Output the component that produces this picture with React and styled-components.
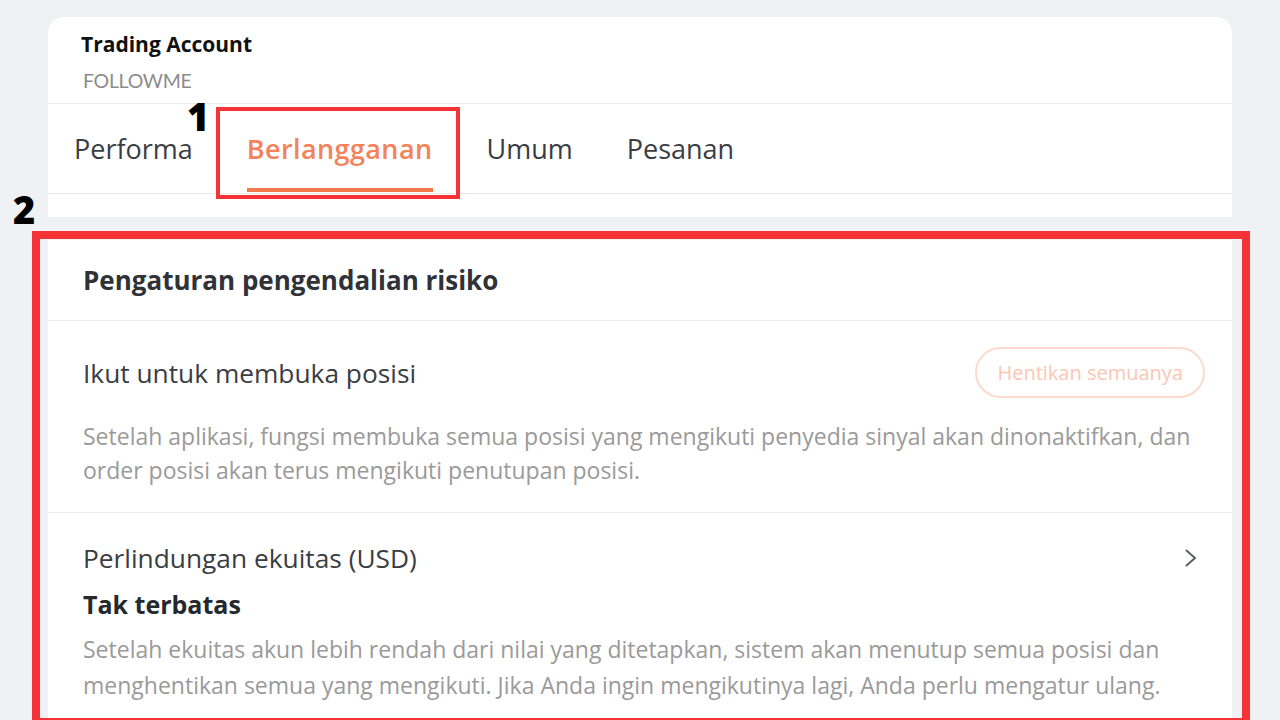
import React from "react";
import styled, { createGlobalStyle } from "styled-components";

const Global = createGlobalStyle`
  html, body { margin: 0; padding: 0; }
  body {
    background: #eff1f5;
    font-family: "Open Sans", "Noto Sans", sans-serif;
    width: 1280px;
    height: 720px;
    overflow: hidden;
  }
`;

const Page = styled.div`
  position: relative;
  width: 1280px;
  height: 720px;
  padding-top: 17px;
  box-sizing: border-box;
`;

const TopCard = styled.section`
  margin-left: 48px;
  width: 1184px;
  background: #fff;
  border-radius: 16px 16px 0 0;
`;

const Header = styled.div`
  padding: 14px 0 0 33px;
  height: 72px;
  border-bottom: 1px solid #e9eaec;
`;

const AccountTitle = styled.div`
  font-family: "Open Sans", sans-serif;
  font-weight: 700;
  font-size: 21px;
  line-height: 26px;
  color: #111;
`;

const AccountSub = styled.div`
  font-family: "Lato", sans-serif;
  font-size: 19.5px;
  line-height: 22px;
  margin: 13px 0 0 2px;
  color: #8c8c8c;
  letter-spacing: -0.3px;
`;

const Tabs = styled.nav`
  display: flex;
  height: 89px;
  padding-left: 26px;
  gap: 54px;
  border-bottom: 1px solid #e9eaec;
`;

const Tab = styled.div`
  position: relative;
  display: flex;
  align-items: center;
  font-size: 27px;
  font-weight: ${(p) => (p.$active ? 600 : 400)};
  letter-spacing: ${(p) => (p.$active ? "0.4px" : "0")};
  color: ${(p) => (p.$active ? "#f5825a" : "#3a3d42")};
  &::after {
    content: "";
    display: ${(p) => (p.$active ? "block" : "none")};
    position: absolute;
    left: 0;
    right: 0;
    bottom: 1px;
    height: 4px;
    background: #f47a4c;
  }
`;

const TopSpacer = styled.div`
  height: 23px;
`;

const ContentCard = styled.section`
  margin: 23px 0 0 48px;
  width: 1184px;
  background: #fff;
`;

const TitleRow = styled.div`
  height: 80px;
  display: flex;
  align-items: center;
  padding-left: 35px;
  font-size: 26px;
  font-weight: 700;
  color: #2f3338;
  border-bottom: 1px solid #e9eaec;
`;

const Item = styled.div`
  padding: ${(p) => p.$pad};
  border-bottom: ${(p) => (p.$last ? "none" : "1px solid #e9eaec")};
`;

const ItemHead = styled.div`
  display: flex;
  align-items: center;
  justify-content: space-between;
  height: ${(p) => p.$h}px;
`;

const Label = styled.div`
  font-size: 26.3px;
  line-height: 34px;
  color: #3a3d42;
`;

const Value = styled.div`
  font-size: 25px;
  font-weight: 700;
  color: #25282c;
  margin-top: 14px;
  line-height: 30px;
`;

const Desc = styled.p`
  margin: ${(p) => p.$mt}px 0 0;
  font-size: 23px;
  line-height: ${(p) => p.$lh}px;
  color: #9a9a9a;
`;

const PillButton = styled.button`
  height: 51px;
  padding: 0 20px;
  border-radius: 26px;
  border: 2px solid #fddacd;
  background: #fff;
  color: #fcc6b2;
  font-family: "Open Sans", sans-serif;
  font-size: 20px;
  cursor: not-allowed;
`;

const Chevron = styled.svg`
  width: 14px;
  height: 20px;
  margin-right: 7px;
`;

const Marker = styled.div`
  position: absolute;
  left: ${(p) => p.$x}px;
  top: ${(p) => p.$y}px;
  font-family: "Open Sans", sans-serif;
  font-weight: 800;
  font-size: 38px;
  line-height: 1;
  color: #000;
`;

const Frame = styled.div`
  position: absolute;
  left: ${(p) => p.$x}px;
  top: ${(p) => p.$y}px;
  width: ${(p) => p.$w}px;
  height: ${(p) => p.$h}px;
  border: ${(p) => p.$b}px solid #f53236;
  box-sizing: border-box;
  pointer-events: none;
`;

export default function App() {
  return (
    <>
      <Global />
      <Page>
        <TopCard>
          <Header>
            <AccountTitle>Trading Account</AccountTitle>
            <AccountSub>FOLLOWME</AccountSub>
          </Header>
          <Tabs>
            <Tab>Performa</Tab>
            <Tab $active>Berlangganan</Tab>
            <Tab>Umum</Tab>
            <Tab>Pesanan</Tab>
          </Tabs>
          <TopSpacer />
        </TopCard>

        <ContentCard>
          <TitleRow>Pengaturan pengendalian risiko</TitleRow>
          <Item $pad="26px 27px 25px 35px">
            <ItemHead $h={51}>
              <Label>Ikut untuk membuka posisi</Label>
              <PillButton disabled>Hentikan semuanya</PillButton>
            </ItemHead>
            <Desc $mt={21} $lh={34}>
              Setelah aplikasi, fungsi membuka semua posisi yang mengikuti penyedia sinyal akan dinonaktifkan, dan
              order posisi akan terus mengikuti penutupan posisi.
            </Desc>
          </Item>
          <Item $last $pad="28px 27px 20px 35px">
            <ItemHead $h={34}>
              <Label>Perlindungan ekuitas (USD)</Label>
              <Chevron viewBox="0 0 14 20" fill="none">
                <path d="M2.5 2.5 L11 10 L2.5 17.5" stroke="#5a5d62" strokeWidth="2" strokeLinecap="round" strokeLinejoin="round" />
              </Chevron>
            </ItemHead>
            <Value>Tak terbatas</Value>
            <Desc $mt={12} $lh={36}>
              Setelah ekuitas akun lebih rendah dari nilai yang ditetapkan, sistem akan menutup semua posisi dan
              menghentikan semua yang mengikuti. Jika Anda ingin mengikutinya lagi, Anda perlu mengatur ulang.
            </Desc>
          </Item>
        </ContentCard>

        <Marker $x={187} $y={97}>1</Marker>
        <Frame $x={216} $y={107} $w={244} $h={92} $b={4} />
        <Marker $x={13} $y={190}>2</Marker>
        <Frame $x={32} $y={231} $w={1218} $h={495} $b={8} />
      </Page>
    </>
  );
}
